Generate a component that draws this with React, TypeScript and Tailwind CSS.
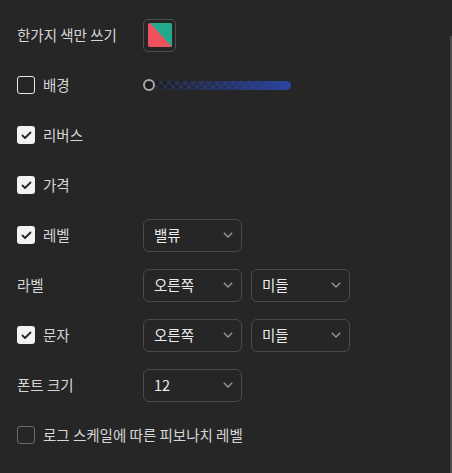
import React from 'react';

const font = { fontFamily: '"Noto Sans CJK KR", "Noto Sans", sans-serif' };

function Check({ checked, dim }: { checked: boolean; dim?: boolean }) {
    if (checked) {
        return (
            <span className="flex h-[18px] w-[18px] shrink-0 items-center justify-center rounded-[3px] bg-[#f2f2f2]">
                <svg width="11" height="9" viewBox="0 0 11 9" fill="none">
                    <path d="M1.5 4.5L4 7L9.5 1.5" stroke="#262626" strokeWidth="1.8" strokeLinecap="round" strokeLinejoin="round" />
                </svg>
            </span>
        );
    }
    return (
        <span
            className={`h-[18px] w-[18px] shrink-0 rounded-[3px] border ${dim ? 'border-[#6a6a6a]' : 'border-[#e6e6e6]'}`}
        />
    );
}

function Select({ value }: { value: string }) {
    return (
        <div className="flex h-[33px] w-[99px] items-center justify-between rounded-[6px] border border-[#4a4a4a] pl-[10px] pr-[8px] text-[14.5px] text-[#ececec]">
            <span>{value}</span>
            <svg width="10" height="6" viewBox="0 0 10 6" fill="none">
                <path d="M0.8 0.8L5 5L9.2 0.8" stroke="#9a9a9a" strokeWidth="1.3" />
            </svg>
        </div>
    );
}

function Row({ children, control }: { children: React.ReactNode; control?: React.ReactNode }) {
    return (
        <div className="flex h-[50px] items-center">
            <div className="flex w-[126px] items-center gap-[8px]">{children}</div>
            <div className="flex items-center gap-[9px]">{control}</div>
        </div>
    );
}

function Label({ text }: { text: string }) {
    return <span className="text-[14.5px] text-[#d6d6d6]">{text}</span>;
}

export default function App() {
    return (
        <div className="relative h-[473px] w-[452px] overflow-hidden bg-[#262626] pl-[17px] pt-[10px]" style={font}>
            <Row
                control={
                    <div className="flex h-[33px] w-[33px] items-center justify-center rounded-[5px] border border-[#4d4d4d]">
                        <svg width="24" height="24" viewBox="0 0 24 24">
                            <rect width="24" height="24" rx="2" fill="#f0515f" />
                            <path d="M2 0H22A2 2 0 0 1 24 2V24Z" fill="#22a98e" />
                        </svg>
                    </div>
                }
            >
                <Label text="한가지 색만 쓰기" />
            </Row>
            <Row
                control={
                    <div className="relative flex h-[12px] w-[148px] items-center">
                        <div
                            className="h-[9px] w-full rounded-full"
                            style={{
                                background:
                                    'linear-gradient(to right, rgba(37,63,143,0) 0%, rgba(40,66,150,0.55) 50%, #2b45a0 100%), repeating-conic-gradient(#1a1a1a 0% 25%, #2e2e2e 0% 50%) 0 0 / 8px 8px',
                            }}
                        />
                        <div className="absolute left-0 h-[12px] w-[12px] rounded-full border-2 border-[#a8a8a8] bg-[#1c1c1c]" />
                    </div>
                }
            >
                <Check checked={false} />
                <Label text="배경" />
            </Row>
            <Row>
                <Check checked />
                <Label text="리버스" />
            </Row>
            <Row>
                <Check checked />
                <Label text="가격" />
            </Row>
            <Row control={<Select value="밸류" />}>
                <Check checked />
                <Label text="레벨" />
            </Row>
            <Row
                control={
                    <>
                        <Select value="오른쪽" />
                        <Select value="미들" />
                    </>
                }
            >
                <Label text="라벨" />
            </Row>
            <Row
                control={
                    <>
                        <Select value="오른쪽" />
                        <Select value="미들" />
                    </>
                }
            >
                <Check checked />
                <Label text="문자" />
            </Row>
            <Row control={<Select value="12" />}>
                <Label text="폰트 크기" />
            </Row>
            <div className="flex h-[50px] items-center gap-[8px]">
                <Check checked={false} dim />
                <Label text="로그 스케일에 따른 피보나치 레벨" />
            </div>
            <div className="absolute right-0 top-[36px] h-[437px] w-[2px] bg-[#4a4a4a]" />
        </div>
    );
}
